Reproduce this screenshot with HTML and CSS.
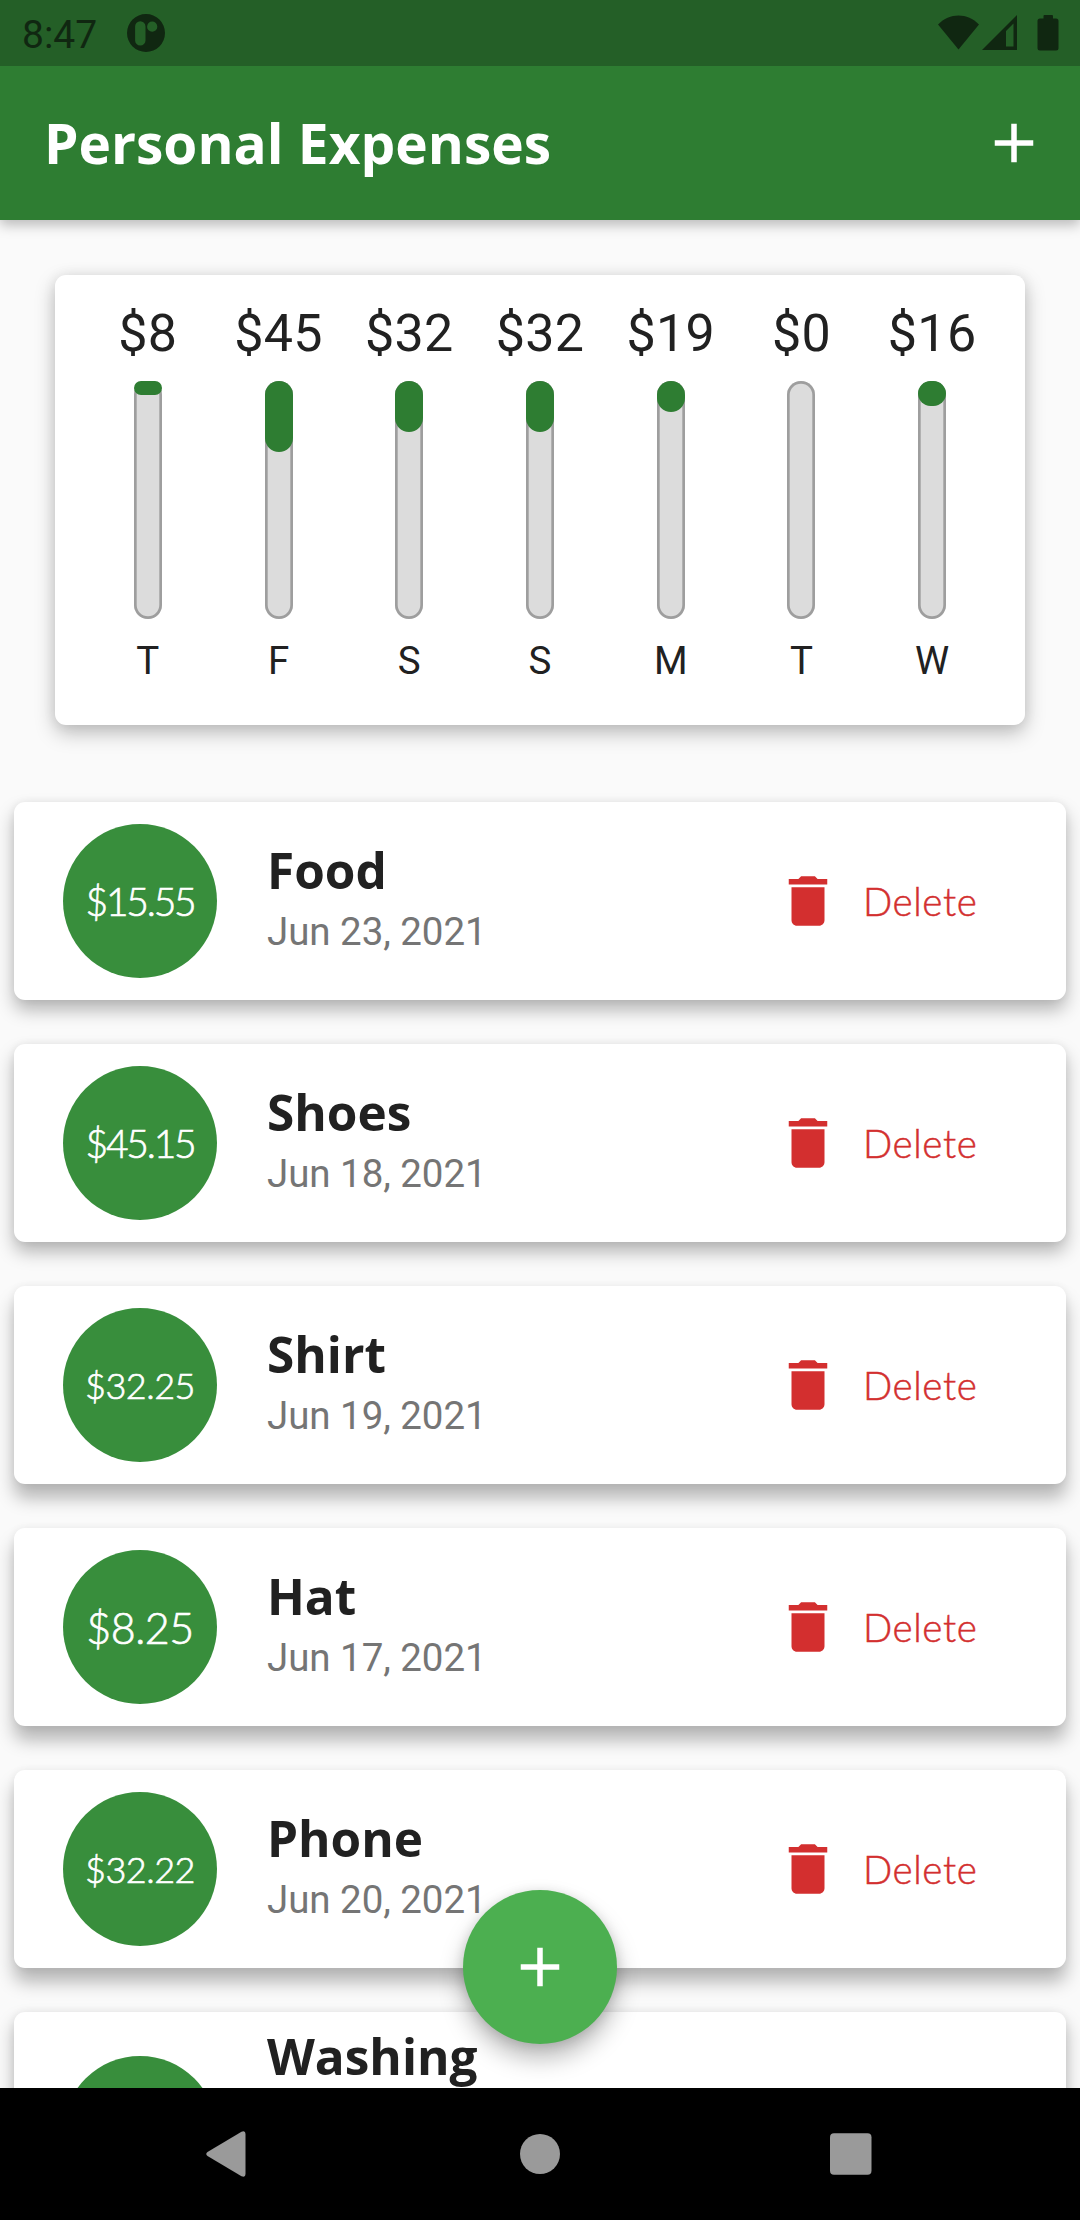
FILE: index.html
```html
<!DOCTYPE html>
<html lang="en">
<head>
<meta charset="utf-8">
<title>Personal Expenses</title>
<link rel="stylesheet" href="styles.css">
</head>
<body>
<svg class="defs" width="0" height="0">
  <symbol id="plus" viewBox="0 0 24 24"><path d="M19 13h-6v6h-2v-6H5v-2h6V5h2v6h6v2z"/></symbol>
  <symbol id="trash" viewBox="0 0 24 24"><path d="M6 19c0 1.1.9 2 2 2h8c1.1 0 2-.9 2-2V7H6v12zM19 4h-3.5l-1-1h-5l-1 1H5v2h14V4z"/></symbol>
</svg>
<div class="screen">
  <div class="status">
    <span class="clock">8:47</span>
    <svg class="notice" width="38" height="38" viewBox="0 0 38 38"><path fill-rule="evenodd" d="M19 0a19 19 0 1 1 0 38a19 19 0 1 1 0-38zM13.3 7.2a5.2 5.2 0 0 0-5.2 5.2v14a5.2 5.2 0 0 0 10.400 0v-14a5.200 5.200 0 0 0-5.200-5.200zM25.200 7.600a5.100 5.100 0 1 0 0 10.200a5.100 5.100 0 1 0 0-10.200z"/></svg>
    <svg class="signals" width="121" height="38" viewBox="0 0 121 38">
      <path d="M0 10.500C11.500-1.500 29.500-1.500 41 10.500L20.500 35.500z"/>
      <path fill-rule="evenodd" d="M44 36L79 1v35zM68 17v15.500h7.500V9.500z"/>
      <path d="M107 1h7q1 0 1 1v2.500h3q2.500 0 2.500 2.500v27q0 2.500-2.500 2.500h-16q-2.500 0-2.500-2.500v-27q0-2.500 2.500-2.500h3.500v-2.500q0-1 1-1z"/>
    </svg>
  </div>
  <header class="appbar">
    <h1>Personal Expenses</h1>
    <svg class="icon"><use href="#plus"/></svg>
  </header>
  <main class="content">
    <section class="chart">
      <div class="day"><span class="sum">$8</span><div class="track"><div class="fill" style="height:13.500px"></div></div><span class="name">T</span></div>
      <div class="day"><span class="sum">$45</span><div class="track"><div class="fill" style="height:70.600px"></div></div><span class="name">F</span></div>
      <div class="day"><span class="sum">$32</span><div class="track"><div class="fill" style="height:50.600px"></div></div><span class="name">S</span></div>
      <div class="day"><span class="sum">$32</span><div class="track"><div class="fill" style="height:50.600px"></div></div><span class="name">S</span></div>
      <div class="day"><span class="sum">$19</span><div class="track"><div class="fill" style="height:30.500px"></div></div><span class="name">M</span></div>
      <div class="day"><span class="sum">$0</span><div class="track"></div><span class="name">T</span></div>
      <div class="day"><span class="sum">$16</span><div class="track"><div class="fill" style="height:24.600px"></div></div><span class="name">W</span></div>
    </section>
    <section class="list">
      <article class="item"><div class="amount mid">$15.55</div><div class="info"><h2>Food</h2><p>Jun 23, 2021</p></div><div class="delete"><svg class="icon"><use href="#trash"/></svg><span>Delete</span></div></article>
      <article class="item"><div class="amount mid">$45.15</div><div class="info"><h2>Shoes</h2><p>Jun 18, 2021</p></div><div class="delete"><svg class="icon"><use href="#trash"/></svg><span>Delete</span></div></article>
      <article class="item low"><div class="amount">$32.25</div><div class="info"><h2>Shirt</h2><p>Jun 19, 2021</p></div><div class="delete"><svg class="icon"><use href="#trash"/></svg><span>Delete</span></div></article>
      <article class="item low"><div class="amount large">$8.25</div><div class="info"><h2>Hat</h2><p>Jun 17, 2021</p></div><div class="delete"><svg class="icon"><use href="#trash"/></svg><span>Delete</span></div></article>
      <article class="item low"><div class="amount">$32.22</div><div class="info"><h2>Phone</h2><p>Jun 20, 2021</p></div><div class="delete"><svg class="icon"><use href="#trash"/></svg><span>Delete</span></div></article>
      <article class="item tall"><div class="amount"></div><div class="info"><h2>Washing</h2></div></article>
    </section>
    <div class="fab"><svg class="icon"><use href="#plus"/></svg></div>
  </main>
  <nav class="navbar">
    <svg width="44" height="46" viewBox="0 0 44 46"><path d="M1.500 21L35.500.800Q39.500-.800 39.500 3v40q0 3.800-4 2.200L1.500 25q-2.500-2 0-4z"/></svg>
    <svg width="42" height="42" viewBox="0 0 42 42"><circle cx="21" cy="21" r="20"/></svg>
    <svg width="42" height="42" viewBox="0 0 42 42"><rect width="41.500" height="41.500" y=".2" rx="4"/></svg>
  </nav>
</div>
</body>
</html>
```
FILE: styles.css
```css
* { box-sizing: border-box; margin: 0; padding: 0; }
body { background: #fafafa; font-family: Roboto, sans-serif; color: #212121; }
svg { display: block; flex: none; }
.defs { display: none; }
.icon { width: 66px; height: 66px; fill: currentColor; }
.screen { width: 1080px; height: 2220px; display: flex; flex-direction: column; overflow: hidden; }

.status {
  height: 66px; flex: none; display: flex; align-items: center;
  padding: 0 21px 0 22px; background: #245f27; color: #102711; fill: #102711;
  position: relative; z-index: 2;
}
.clock { font-size: 39px; line-height: 66px; width: 105px; padding-top: 3px; }
.signals { margin-left: auto; }

.appbar {
  height: 154px; flex: none; display: flex; align-items: center; justify-content: space-between;
  padding: 0 33px 0 44px; background: #2e7d32; color: #fff;
  position: relative; z-index: 1;
  box-shadow: 0 5px 12px rgba(0, 0, 0, .26);
}
.appbar h1 { font: 700 55px/66px "Open Sans", sans-serif; }

.content { flex: 1; min-height: 0; overflow: hidden; position: relative; padding: 55px 0 0; }
.chart {
  height: 450px; margin: 0 55px; padding: 28px 27.500px 0; border-radius: 11px; background: #fff;
  display: grid; grid-template-columns: repeat(7, 1fr);
  box-shadow: 0 8px 20px rgba(0, 0, 0, .25), 0 0 14px rgba(0, 0, 0, .07);
}
.day { display: flex; flex-direction: column; align-items: center; }
.sum { font-size: 52px; line-height: 62px; height: 78px; letter-spacing: .300px; white-space: nowrap; }
.track {
  width: 28px; height: 238px; border-radius: 14px; background: #dcdcdc;
  box-shadow: inset 0 0 0 2.700px #9e9e9e;
}
.fill { border-radius: 14px; background: #2e7d32; }
.name { font-size: 38.500px; line-height: 46px; margin-top: 19px; }

.list { padding: 77px 14px 0; display: flex; flex-direction: column; gap: 44px; }
.item {
  height: 198px; flex: none; padding: 0 49px; border-radius: 11px; background: #fff;
  display: flex; align-items: center;
  box-shadow: 0 10px 18px rgba(0, 0, 0, .28), 0 0 9px rgba(0, 0, 0, .06);
}
.item.low { box-shadow: 0 14px 18px rgba(0, 0, 0, .28), 0 0 9px rgba(0, 0, 0, .06); }
.item.tall { height: 242px; }
.item.tall .info { align-self: flex-start; padding-top: 13px; }
.amount {
  width: 154px; height: 154px; flex: none; border-radius: 50%; background: #388e3c; color: #fff;
  display: flex; align-items: center; justify-content: center;
  font: 300 36px/44px Lato, sans-serif; letter-spacing: -.500px;
  -webkit-text-stroke: .700px currentColor;
}
.amount.mid { font-size: 39px; letter-spacing: -2.200px; }
.amount.large { font-size: 43px; letter-spacing: -.500px; padding-top: 2px; }
.info { margin-left: 50px; }
.info h2 { font: 700 49.500px/62px "Open Sans", sans-serif; }
.info p { font-size: 38.500px; line-height: 62px; color: #757575; letter-spacing: -.050px; }
.delete { margin-left: auto; width: 242px; display: flex; align-items: center; gap: 22px; color: #d32f2f; }
.delete span { font: 300 38.500px/48px Lato, sans-serif; letter-spacing: .600px; -webkit-text-stroke: .500px currentColor; }

.fab {
  position: absolute; left: 463px; bottom: 44px; width: 154px; height: 154px; border-radius: 50%;
  background: #4caf50; color: #fff; display: flex; align-items: center; justify-content: center;
  box-shadow: 0 14px 24px rgba(0, 0, 0, .28), 0 2px 12px rgba(0, 0, 0, .12);
}

.navbar {
  height: 132px; flex: none; background: #000; fill: #9a9a9a;
  display: flex; align-items: center; justify-content: space-between; padding: 0 208px 0 206px;
}
```
